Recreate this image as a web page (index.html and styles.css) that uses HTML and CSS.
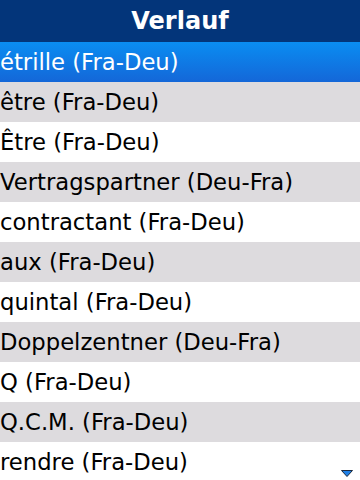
FILE: index.html
```html
<!DOCTYPE html>
<html>
<head>
<meta charset="utf-8">
<link rel="stylesheet" href="styles.css">
</head>
<body>
<div class="screen">
  <div class="header">Verlauf</div>
  <ul class="list">
    <li class="row selected">étrille (Fra-Deu)</li>
    <li class="row gray">être (Fra-Deu)</li>
    <li class="row">Être (Fra-Deu)</li>
    <li class="row gray">Vertragspartner (Deu-Fra)</li>
    <li class="row">contractant (Fra-Deu)</li>
    <li class="row gray">aux (Fra-Deu)</li>
    <li class="row">quintal (Fra-Deu)</li>
    <li class="row gray">Doppelzentner (Deu-Fra)</li>
    <li class="row">Q (Fra-Deu)</li>
    <li class="row gray">Q.C.M. (Fra-Deu)</li>
    <li class="row">rendre (Fra-Deu)</li>
  </ul>
  <svg class="more" width="12" height="7" viewBox="0 0 12 7"><path d="M0.5 0.5 H11.5 L6 6.5 Z" fill="#1e7fe6" stroke="#1a2a40" stroke-width="1"/></svg>
</div>
</body>
</html>
```
FILE: styles.css
```css
html, body { margin: 0; padding: 0; }
body { width: 360px; height: 480px; overflow: hidden; background: #fff; font-family: "DejaVu Sans", sans-serif; }
.screen { position: relative; width: 360px; height: 480px; overflow: hidden; }
.header { height: 42px; background: #03357a; color: #fff; font-weight: bold; font-size: 24px; display: flex; align-items: center; justify-content: center; }
.list { list-style: none; margin: 0; padding: 0; }
.row { height: 40px; display: flex; align-items: center; font-size: 22.7px; color: #000; padding-left: 0; white-space: nowrap; }
.row.gray { background: #dddbde; }
.row.selected { background: linear-gradient(#0a8df2, #1467d8); color: #fff; }
.more { position: absolute; right: 7px; bottom: 3px; }
```
